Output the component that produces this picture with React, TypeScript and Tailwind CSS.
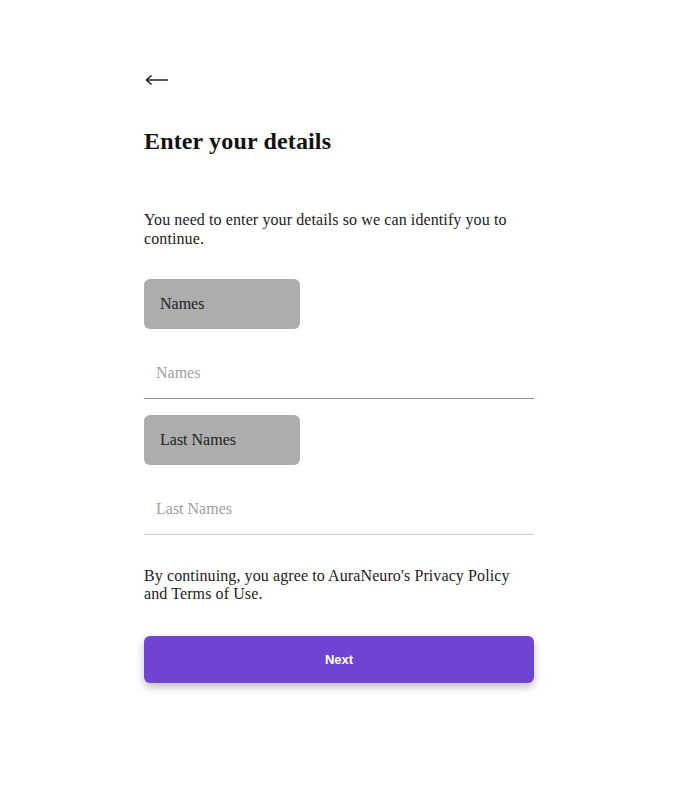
import React from "react";

const serif = { fontFamily: '"Liberation Serif", "Times New Roman", serif' };

const LabelBox = ({ text }: { text: string }) => (
  <div className="flex h-[50px] w-[156px] items-center rounded-md bg-[#adadad] pl-4 text-[16px] text-[#222]">
    {text}
  </div>
);

export default function App() {
  return (
    <div className="min-h-[805px] bg-white" style={serif}>
      <div className="flex w-[534px] flex-col pl-[144px] pt-[74px]">
        {/* back arrow */}
        <svg width="24" height="12" viewBox="0 0 24 12" className="ml-[1px]" fill="none" stroke="#111" strokeWidth="1.4">
          <path d="M1.5 6 H23" />
          <path d="M6.5 1.5 L1.5 6 L6.5 10.5" />
        </svg>

        <h1 className="mt-[41px] text-[24px] font-bold leading-[28px] tracking-[0.15px] text-[#111]">Enter your details</h1>

        <p className="mt-[55px] text-[16px] leading-[19px] tracking-[0.1px] text-[#222]">
          You need to enter your details so we can identify you to continue.
        </p>

        <div className="mt-[31px]">
          <LabelBox text="Names" />
        </div>
        <input
          placeholder="Names"
          className="mt-[22px] h-[48px] w-full border-b border-[#8e8ca6] bg-transparent pb-[4px] pl-3 text-[16px] outline-none placeholder:text-[#a0a0a0]"
          style={serif}
        />

        <div className="mt-[16px]">
          <LabelBox text="Last Names" />
        </div>
        <input
          placeholder="Last Names"
          className="mt-[22px] h-[48px] w-full border-b border-[#cdcdcd] bg-transparent pb-[4px] pl-3 text-[16px] outline-none placeholder:text-[#a0a0a0]"
          style={serif}
        />

        <p className="mt-[32px] w-[380px] text-[16px] leading-[18px] tracking-[0.1px] text-[#222]">
          By continuing, you agree to AuraNeuro's Privacy Policy and Terms of Use.
        </p>

        <button
          className="mt-[33px] h-[47px] w-full rounded-md bg-[#6f44d3] text-[13px] font-bold text-white shadow-[0_4px_8px_rgba(0,0,0,0.25)]"
          style={{ fontFamily: '"Liberation Sans", Arial, sans-serif' }}
        >
          Next
        </button>
      </div>
    </div>
  );
}
